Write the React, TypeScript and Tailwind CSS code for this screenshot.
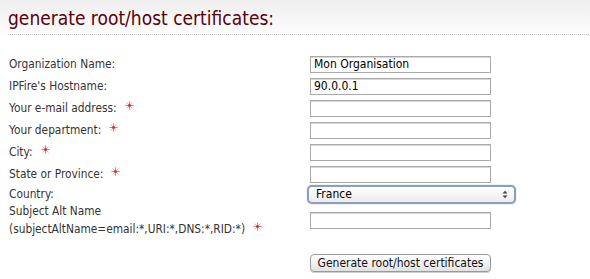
import React from "react";

const Star = () => (
  <svg width="9" height="9" viewBox="0 0 10 10" className="inline-block ml-[8px] align-[2px]">
    <g stroke="#ec6a62" strokeWidth="1" strokeLinecap="round">
      <line x1="5" y1="0.8" x2="5" y2="9.2" />
      <line x1="0.8" y1="5" x2="9.2" y2="5" />
      <line x1="2" y1="2" x2="8" y2="8" opacity="0.6" />
      <line x1="8" y1="2" x2="2" y2="8" opacity="0.6" />
    </g>
    <circle cx="5" cy="5" r="1.5" fill="#d8201c" />
  </svg>
);

const labelFont = { fontFamily: '"DejaVu Sans Condensed", "DejaVu Sans", sans-serif' };
const ctrlFont = { fontFamily: '"DejaVu Sans Condensed", "DejaVu Sans", sans-serif' };

const Input = ({ value }: { value?: string }) => (
  <div
    className="w-[181px] h-[17px] border border-[#aaaaaa] bg-white text-[12px] leading-[15px] text-black pl-[3px] shadow-[inset_0_1px_0_#d8d8d8]"
    style={ctrlFont}
  >
    {value ?? ""}
  </div>
);

const Row = ({ label, star, children, h = "h-[22px]" }: { label: React.ReactNode; star?: boolean; children: React.ReactNode; h?: string }) => (
  <div className={`flex items-center ${h}`}>
    <div className="w-[310px] shrink-0 pl-[9px] text-[11.8px] leading-[18px] text-[#333333]" style={labelFont}>
      {label}
      {star && <Star />}
    </div>
    <div className="flex items-center">{children}</div>
  </div>
);

export default function App() {
  return (
    <div className="w-[590px] h-[279px] overflow-hidden bg-[linear-gradient(#eeeeee,#ffffff_38px)]">
      <div className="pt-[5px] pl-[8px]">
        <h1 className="text-[19px] leading-[26px] text-[#5a000c]" style={labelFont}>
          generate root/host certificates:
        </h1>
        <div className="mt-[3px] h-px bg-[linear-gradient(90deg,#c8c8c8_1px,transparent_1px)] bg-[length:2px_1px]" />
      </div>
      <div className="mt-[18px]">
        <Row label="Organization Name:"><Input value="Mon Organisation" /></Row>
        <Row label="IPFire's Hostname:"><Input value="90.0.0.1" /></Row>
        <Row label="Your e-mail address:" star><Input /></Row>
        <Row label="Your department:" star><Input /></Row>
        <Row label="City:" star><Input /></Row>
        <Row label="State or Province:" star><Input /></Row>
        <Row label="Country:" h="h-[18px]">
          <div className="ml-[-3px] w-[209px] h-[19px] rounded-[5px] border-2 border-[#8d9fb6] bg-[linear-gradient(#ffffff,#ececec)] flex items-center justify-between pl-[7px] pr-[6px] text-[12px] text-black shadow-[0_0_1px_#5a6e88]" style={ctrlFont}>
            <span>France</span>
            <svg width="6" height="9" viewBox="0 0 6 9">
              <path d="M0.5 3.5 L3 0.8 L5.5 3.5 Z M0.5 5.5 L3 8.2 L5.5 5.5 Z" fill="#444" />
            </svg>
          </div>
        </Row>
        <Row
          h="h-[34px]"
          label={
            <div>
              <div>Subject Alt Name</div>
              <div>
                (subjectAltName=email:*,URI:*,DNS:*,RID:*)
                <Star />
              </div>
            </div>
          }
        >
          <Input />
        </Row>
        <div className="mt-[17px] pl-[310px] flex">
          <button
            className="w-[181px] h-[18px] rounded-[4px] border border-[#9a9a9a] bg-[linear-gradient(#ffffff,#f2f2f2_50%,#e2e2e2)] text-[12px] leading-[16px] text-[#111] shadow-[0_1px_0_#d0d0d0]"
            style={ctrlFont}
          >
            Generate root/host certificates
          </button>
        </div>
      </div>
    </div>
  );
}
